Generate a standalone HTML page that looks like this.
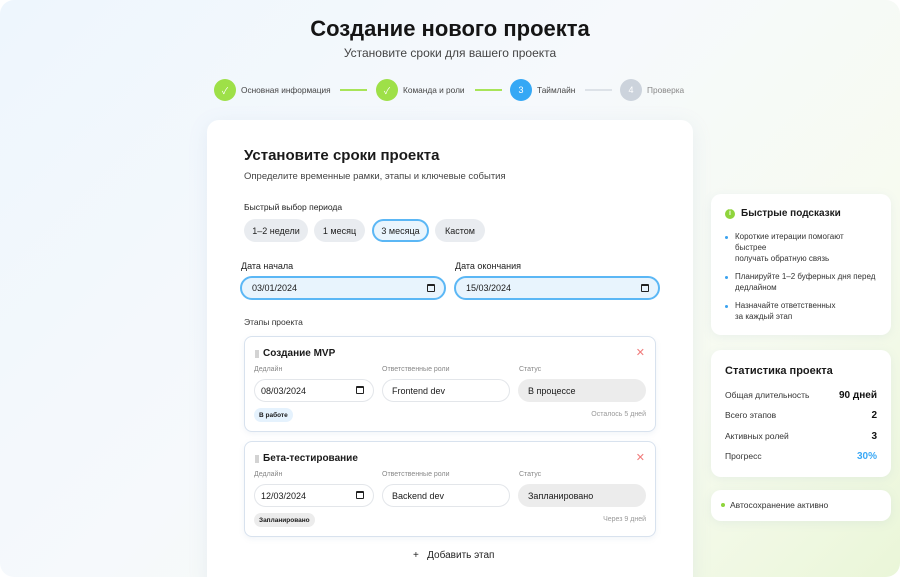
<!DOCTYPE html>
<html><head><meta charset="utf-8"><style>
*{box-sizing:border-box;margin:0;padding:0}
body{width:900px;height:577px;overflow:hidden;font-family:"Liberation Sans","Noto Sans CJK SC",sans-serif;color:#1a1a1a;background:#fff}
.bg{position:absolute;left:0;top:0;width:900px;height:577px;border-radius:14px;background:linear-gradient(135deg,#eef6fd 0%,#f6f9fc 45%,#f7fbf0 75%,#eaf6d8 100%);overflow:hidden}
.a{position:absolute}
.h1{left:0;width:900px;text-align:center;top:16px;font-size:22px;font-weight:bold;color:#151515}
.sub{left:0;width:900px;text-align:center;top:46px;font-size:12px;color:#444}
.c{width:22px;height:22px;border-radius:50%;color:#fff;font-size:9px;display:flex;align-items:center;justify-content:center;top:79px}
.sl{font-size:8.3px;color:#444;top:85px}
.ln{height:2px;top:89px}
.card{left:207px;top:120px;width:486px;height:470px;background:#fff;border-radius:12px;box-shadow:0 4px 20px rgba(120,150,190,.12)}
.chip{top:219px;height:23px;border-radius:12px;background:#e9ecf0;font-size:9px;display:flex;align-items:center;justify-content:center;color:#222}
.lab{font-size:9px;color:#222}
.date{height:24px;border:2px solid #5bb7f5;background:#e8f4fd;border-radius:12px;font-size:9px;padding-left:10px;display:flex;align-items:center}
.cal{position:absolute;right:9px;top:6px;width:8px;height:8px;border:1.3px solid #222;border-top-width:2.5px;border-radius:1px}
.stage{left:244px;width:412px;height:96px;border:1px solid #d8e2ee;border-radius:8px;background:#fff;box-shadow:0 2px 6px rgba(120,150,190,.1)}
.st{font-size:10px;font-weight:bold;left:18px;top:11px}
.grip{left:10px;top:13px;width:4px;height:8px;background-image:radial-gradient(circle,#c4c4c4 0.8px,transparent 1px);background-size:2px 2px}
.sx{right:10px;top:9px;color:#f07a7a;font-size:11px}
.sm{font-size:7px;color:#888;top:29px}
.inp{top:42px;height:23px;border:1px solid #e3e6ea;border-radius:12px;font-size:9px;display:flex;align-items:center;padding-left:9px}
.tag{top:71px;height:14px;border-radius:7px;font-size:6.5px;font-weight:bold;display:flex;align-items:center;padding:0 5px}
.rt{right:9px;top:74px;font-size:7px;color:#999}
.side{left:711px;width:180px;background:#fff;border-radius:10px;box-shadow:0 2px 10px rgba(120,150,190,.1)}
.tip{font-size:8px;color:#333;left:24px;line-height:11px}
.dot{width:3px;height:3px;border-radius:50%;background:#3aa2ef;left:14px}
.sr{left:14px;width:152px;font-size:8.5px;color:#333;display:flex;justify-content:space-between}
.sr b{font-size:10px;color:#111}
</style></head><body><div class="bg">
<div class="a h1">Создание нового проекта</div>
<div class="a sub">Установите сроки для вашего проекта</div>

<div class="a c" style="left:214px;background:#9ee048">✓</div>
<div class="a sl" style="left:241px">Основная информация</div>
<div class="a ln" style="left:340px;width:27px;background:#a8e458"></div>
<div class="a c" style="left:376px;background:#9ee048">✓</div>
<div class="a sl" style="left:403px">Команда и роли</div>
<div class="a ln" style="left:475px;width:27px;background:#a8e458"></div>
<div class="a c" style="left:510px;background:#35a8f5">3</div>
<div class="a sl" style="left:537px">Таймлайн</div>
<div class="a ln" style="left:585px;width:27px;background:#dde2e8"></div>
<div class="a c" style="left:620px;background:#ccd3dc">4</div>
<div class="a sl" style="left:647px;color:#888">Проверка</div>

<div class="a card"></div>
<div class="a" style="left:244px;top:147px;font-size:15px;font-weight:bold">Установите сроки проекта</div>
<div class="a" style="left:244px;top:171px;font-size:9.5px;color:#444">Определите временные рамки, этапы и ключевые события</div>
<div class="a lab" style="left:244px;top:202px;font-size:8.5px">Быстрый выбор периода</div>
<div class="a chip" style="left:244px;width:64px">1–2 недели</div>
<div class="a chip" style="left:314px;width:51px">1 месяц</div>
<div class="a chip" style="left:372px;width:57px;background:#eaf5fd;border:2px solid #5bb7f5">3 месяца</div>
<div class="a chip" style="left:435px;width:50px">Кастом</div>

<div class="a lab" style="left:241px;top:261px">Дата начала</div>
<div class="a lab" style="left:455px;top:261px">Дата окончания</div>
<div class="a date" style="left:240px;top:276px;width:206px">03/01/2024<span class="cal"></span></div>
<div class="a date" style="left:454px;top:276px;width:206px">15/03/2024<span class="cal"></span></div>
<div class="a lab" style="left:244px;top:317px;font-size:8.5px;color:#333">Этапы проекта</div>

<div class="a stage" style="top:336px">
<div class="a grip"></div>
<div class="a st">Создание MVP</div><div class="a sx">✕</div>
<div class="a sm" style="left:9px">Дедлайн</div><div class="a sm" style="left:137px">Ответственные роли</div><div class="a sm" style="left:274px">Статус</div>
<div class="a inp" style="left:9px;width:120px;padding-left:6px">08/03/2024<span class="cal" style="top:6px"></span></div>
<div class="a inp" style="left:137px;width:128px">Frontend dev</div>
<div class="a inp" style="left:273px;width:128px;background:#ececec;border-color:#ececec">В процессе</div>
<div class="a tag" style="left:9px;background:#e5f2fd">В работе</div>
<div class="a rt">Осталось 5 дней</div>
</div>

<div class="a stage" style="top:441px">
<div class="a grip"></div>
<div class="a st">Бета-тестирование</div><div class="a sx">✕</div>
<div class="a sm" style="left:9px">Дедлайн</div><div class="a sm" style="left:137px">Ответственные роли</div><div class="a sm" style="left:274px">Статус</div>
<div class="a inp" style="left:9px;width:120px;padding-left:6px">12/03/2024<span class="cal" style="top:6px"></span></div>
<div class="a inp" style="left:137px;width:128px">Backend dev</div>
<div class="a inp" style="left:273px;width:128px;background:#ececec;border-color:#ececec">Запланировано</div>
<div class="a tag" style="left:9px;background:#ececec">Запланировано</div>
<div class="a rt">Через 9 дней</div>
</div>
<div class="a" style="left:413px;top:550px;font-size:10px;color:#222">+&nbsp;&nbsp;&nbsp;Добавить этап</div>

<div class="a side" style="top:194px;height:141px">
<div class="a" style="left:14px;top:15px;width:10px;height:10px;border-radius:50%;background:#8fd43c;color:#fff;font-size:7px;font-weight:bold;text-align:center;line-height:10px">i</div>
<div class="a" style="left:30px;top:14px;font-size:10px;font-weight:bold">Быстрые подсказки</div>
<div class="a dot" style="top:42px"></div><div class="a tip" style="top:37px">Короткие итерации помогают<br>быстрее<br>получать обратную связь</div>
<div class="a dot" style="top:82px"></div><div class="a tip" style="top:77px">Планируйте 1–2 буферных дня перед<br>дедлайном</div>
<div class="a dot" style="top:111px"></div><div class="a tip" style="top:106px">Назначайте ответственных<br>за каждый этап</div>
</div>

<div class="a side" style="top:350px;height:127px">
<div class="a" style="left:14px;top:15px;font-size:11px;font-weight:bold">Статистика проекта</div>
<div class="a sr" style="top:40px"><span>Общая длительность</span><b>90 дней</b></div>
<div class="a sr" style="top:60px"><span>Всего этапов</span><b>2</b></div>
<div class="a sr" style="top:81px"><span>Активных ролей</span><b>3</b></div>
<div class="a sr" style="top:101px"><span>Прогресс</span><b style="color:#3aa8f5">30%</b></div>
</div>

<div class="a side" style="top:490px;height:31px">
<div class="a" style="left:10px;top:13px;width:4px;height:4px;border-radius:50%;background:#8fd43c"></div>
<div class="a" style="left:19px;top:10px;font-size:8.5px;color:#333">Автосохранение активно</div>
</div>
</div></body></html>
